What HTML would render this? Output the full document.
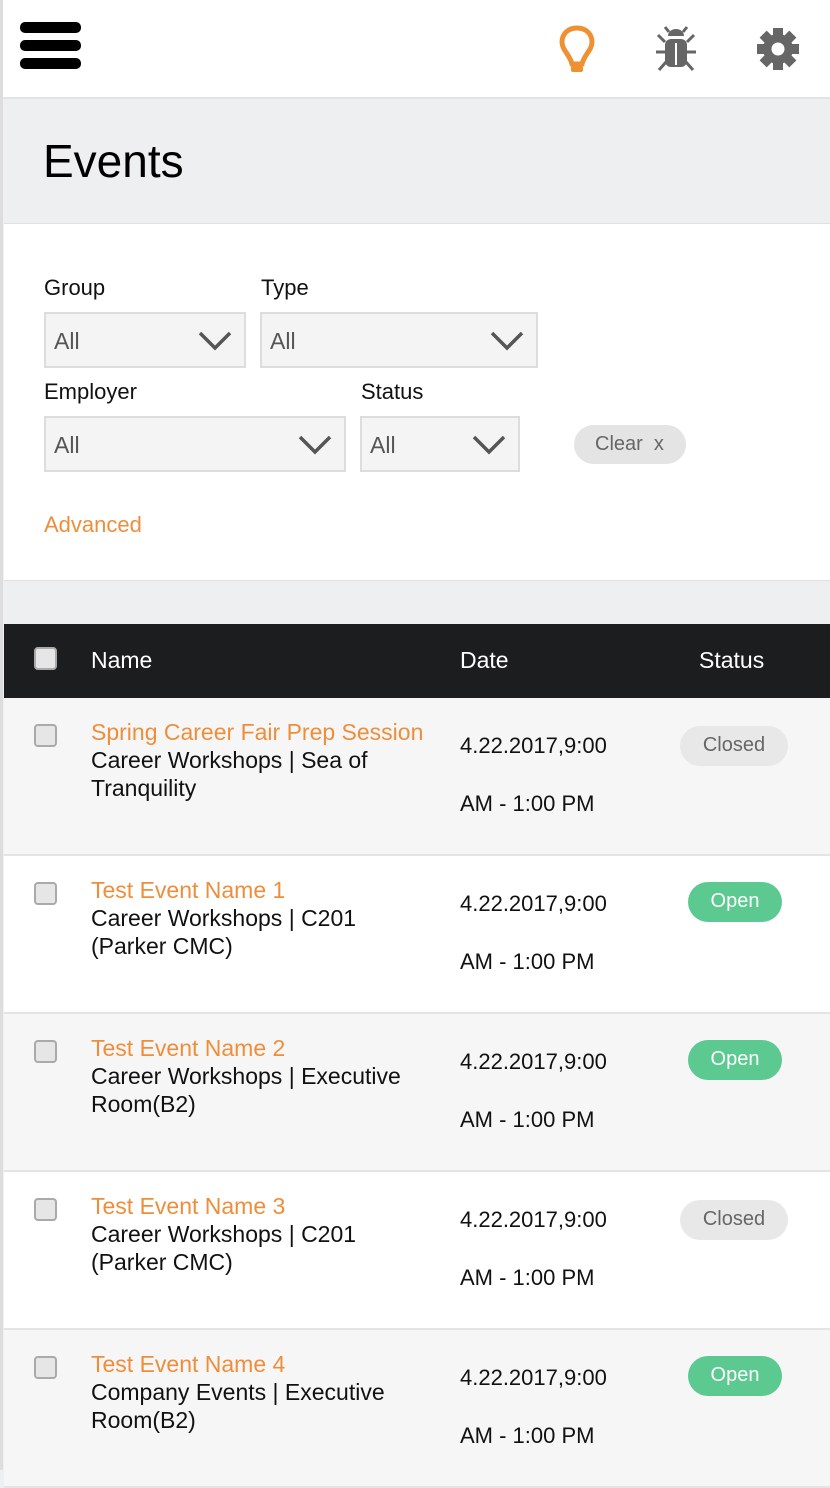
<!DOCTYPE html>
<html><head><style>
*{box-sizing:border-box;margin:0;padding:0}
body{width:830px;height:1470px;overflow:hidden;background:#eeeff0;font-family:"Liberation Sans",sans-serif;position:relative}
.abs{position:absolute}
.lb{left:0;top:0;width:3px;height:1470px;background:#ddd;z-index:5}
.hdr{left:0;top:0;width:830px;height:99px;background:#fff;border-bottom:2px solid #e2e3e4}
.bar{position:absolute;left:20px;width:61px;height:11px;border-radius:5px;background:#000}
.title{left:43px;top:134px;font-size:46px;color:#000}
.panel{left:4px;top:223px;width:826px;height:358px;background:#fff;border-top:1px solid #e0e0e0;border-bottom:1px solid #e0e0e0}
.lbl{position:absolute;font-size:22px;color:#111}
.sel{position:absolute;height:56px;background:#f4f4f4;border:2px solid #ddd;font-size:23px;color:#555;padding:14px 0 0 8px}
.sel svg{position:absolute;right:12px;top:16px}
.clear{left:574px;top:425px;width:112px;height:39px;border-radius:20px;background:#e4e4e4;color:#666;font-size:20px;padding:8px 0 0 21px}
.adv{left:44px;top:512px;font-size:22px;color:#ef8e3a}
.th{left:4px;top:624px;width:826px;height:74px;background:#1c1d1f;color:#fff;font-size:23px}
.cb{position:absolute;width:23px;height:23px;border:2px solid #aaa;border-radius:4px;background:#e6e6e6}
.row{position:absolute;left:4px;width:826px;height:158px;border-bottom:2px solid #e4e4e4}
.row .n{position:absolute;left:87px;top:20px;font-size:23px;line-height:28px;color:#111;width:360px}
.row .n span{color:#ef8e3a}
.row .d{position:absolute;left:456px;top:19px;font-size:22px;line-height:58px;color:#111}
.pill{position:absolute;height:40px;border-radius:20px;font-size:20px;padding-top:8px;text-align:center}
.closed{left:676px;width:108px;background:#e8e8e8;color:#666;top:28px}
.open{left:684px;width:94px;background:#5cc990;color:#fff;top:26px}
</style></head><body>
<div class="abs lb"></div>
<div class="abs hdr">
<div class="bar" style="top:22px"></div><div class="bar" style="top:40px"></div><div class="bar" style="top:58px"></div>
<svg class="abs" style="left:557px;top:25px" width="40" height="48" viewBox="0 0 40 48"><path d="M20 3C11 3 5 9 5 17c0 8 8 13 10 22h10c2-9 10-14 10-22C35 9 29 3 20 3z" fill="none" stroke="#ef9133" stroke-width="5"/><rect x="14" y="41" width="12" height="6" rx="2" fill="#ef9133"/></svg>
<svg class="abs" style="left:654px;top:26px" width="44" height="46" viewBox="0 0 44 46"><path d="M14 10a8 7 0 0 1 16 0z" fill="#666"/><rect x="11" y="13" width="22" height="28" rx="6" fill="#666"/><rect x="21" y="17" width="2" height="22" fill="#fff"/><path d="M11 16L4 9M33 16L40 9M11 26H2M33 26H42M12 36L5 44M32 36L39 44M15 6L11 1M29 6L33 1" stroke="#666" stroke-width="3"/></svg>
<svg class="abs" style="left:756px;top:27px" width="44" height="44" viewBox="-22 -22 44 44"><g fill="#666"><circle r="15"/><rect x="-5" y="-21" width="10" height="42"/><rect x="-5" y="-21" width="10" height="42" transform="rotate(45)"/><rect x="-5" y="-21" width="10" height="42" transform="rotate(90)"/><rect x="-5" y="-21" width="10" height="42" transform="rotate(135)"/></g><circle r="6.5" fill="#fff"/></svg>
</div>
<div class="abs title">Events</div>
<div class="abs panel"></div>
<div class="lbl" style="left:44px;top:275px">Group</div>
<div class="lbl" style="left:261px;top:275px">Type</div>
<div class="lbl" style="left:44px;top:379px">Employer</div>
<div class="lbl" style="left:361px;top:379px">Status</div>
<div class="sel" style="left:44px;top:312px;width:202px">All<svg width="34" height="22"><path d="M2 3L17 18L32 3" fill="none" stroke="#555" stroke-width="3.5"/></svg></div>
<div class="sel" style="left:260px;top:312px;width:278px">All<svg width="34" height="22"><path d="M2 3L17 18L32 3" fill="none" stroke="#555" stroke-width="3.5"/></svg></div>
<div class="sel" style="left:44px;top:416px;width:302px">All<svg width="34" height="22"><path d="M2 3L17 18L32 3" fill="none" stroke="#555" stroke-width="3.5"/></svg></div>
<div class="sel" style="left:360px;top:416px;width:160px">All<svg width="34" height="22"><path d="M2 3L17 18L32 3" fill="none" stroke="#555" stroke-width="3.5"/></svg></div>
<div class="abs clear">Clear&nbsp; x</div>
<div class="abs adv">Advanced</div>
<div class="abs th"><div class="cb" style="left:30px;top:23px"></div><div class="abs" style="left:87px;top:23px">Name</div><div class="abs" style="left:456px;top:23px">Date</div><div class="abs" style="left:695px;top:23px">Status</div></div>

<div class="row" style="top:698px;background:#f6f6f6"><div class="cb" style="left:30px;top:26px"></div><div class="n"><span>Spring Career Fair Prep Session</span><br>Career Workshops | Sea of<br>Tranquility</div><div class="d">4.22.2017,9:00<br>AM - 1:00 PM</div><div class="pill closed">Closed</div></div>
<div class="row" style="top:856px;background:#fff"><div class="cb" style="left:30px;top:26px"></div><div class="n"><span>Test Event Name 1</span><br>Career Workshops | C201<br>(Parker CMC)</div><div class="d">4.22.2017,9:00<br>AM - 1:00 PM</div><div class="pill open">Open</div></div>
<div class="row" style="top:1014px;background:#f6f6f6"><div class="cb" style="left:30px;top:26px"></div><div class="n"><span>Test Event Name 2</span><br>Career Workshops | Executive<br>Room(B2)</div><div class="d">4.22.2017,9:00<br>AM - 1:00 PM</div><div class="pill open">Open</div></div>
<div class="row" style="top:1172px;background:#fff"><div class="cb" style="left:30px;top:26px"></div><div class="n"><span>Test Event Name 3</span><br>Career Workshops | C201<br>(Parker CMC)</div><div class="d">4.22.2017,9:00<br>AM - 1:00 PM</div><div class="pill closed">Closed</div></div>
<div class="row" style="top:1330px;background:#f6f6f6"><div class="cb" style="left:30px;top:26px"></div><div class="n"><span>Test Event Name 4</span><br>Company Events | Executive<br>Room(B2)</div><div class="d">4.22.2017,9:00<br>AM - 1:00 PM</div><div class="pill open">Open</div></div>
</body></html>
